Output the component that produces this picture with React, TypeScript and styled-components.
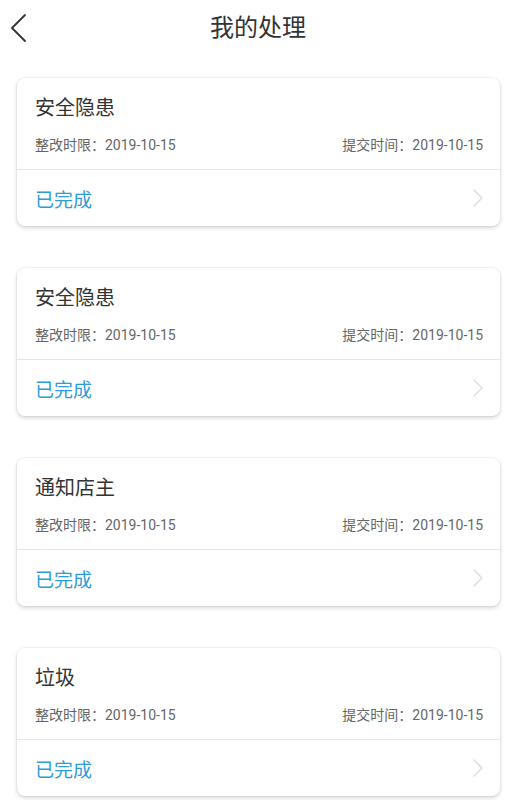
import styled, { createGlobalStyle } from "styled-components";

const GlobalStyle = createGlobalStyle`
  body {
    margin: 0;
    background: #fff;
    font-family: Roboto, "Noto Sans CJK SC", sans-serif;
  }
`;

const Page = styled.div`
  width: 520px;
  min-height: 800px;
  background: #fff;
`;

const Header = styled.header`
  position: relative;
  height: 56px;
  display: flex;
  align-items: center;
  justify-content: center;
`;

const BackBtn = styled.button`
  position: absolute;
  left: 6px;
  top: 11px;
  width: 24px;
  height: 34px;
  padding: 0;
  border: 0;
  background: none;
  display: flex;
  align-items: center;
  justify-content: center;
`;

const Title = styled.h1`
  margin: 0;
  margin-left: -4px;
  font-size: 24px;
  font-weight: 400;
  color: #333;
  line-height: 32px;
`;

const List = styled.div`
  display: flex;
  flex-direction: column;
  gap: 42px;
  padding: 22px 20px 20px 17px;
`;

const Card = styled.article`
  background: #fff;
  border-radius: 8px;
  box-shadow: 0 0 0 1px rgba(0, 0, 0, 0.04), 0 2px 4px rgba(0, 0, 0, 0.16);
  overflow: hidden;
`;

const Top = styled.div`
  padding: 16px 17px 14px 18px;
  border-bottom: 1px solid #e6e6e6;
`;

const CardTitle = styled.h2`
  margin: 0;
  font-size: 20px;
  line-height: 28px;
  font-weight: 400;
  color: #333;
`;

const Meta = styled.div`
  margin-top: 13px;
  display: flex;
  justify-content: space-between;
  font-size: 14px;
  line-height: 20px;
  color: #666;
`;

const Bottom = styled.div`
  height: 56px;
  display: flex;
  align-items: center;
  justify-content: space-between;
  padding: 0 16px 0 18px;
`;

const Status = styled.span`
  font-size: 19px;
  color: #2e9dd6;
`;

type Item = { title: string; deadline: string; submitted: string };

const items: Item[] = [
  { title: "安全隐患", deadline: "2019-10-15", submitted: "2019-10-15" },
  { title: "安全隐患", deadline: "2019-10-15", submitted: "2019-10-15" },
  { title: "通知店主", deadline: "2019-10-15", submitted: "2019-10-15" },
  { title: "垃圾", deadline: "2019-10-15", submitted: "2019-10-15" },
];

function Chevron({ dir, color, w, h, sw }: { dir: "l" | "r"; color: string; w: number; h: number; sw: number }) {
  const d = dir === "l" ? `M${w - 2} 2 L2 ${h / 2} L${w - 2} ${h - 2}` : `M2 2 L${w - 2} ${h / 2} L2 ${h - 2}`;
  return (
    <svg width={w} height={h} viewBox={`0 0 ${w} ${h}`} fill="none">
      <path d={d} stroke={color} strokeWidth={sw} strokeLinecap="round" strokeLinejoin="round" />
    </svg>
  );
}

export default function App() {
  return (
    <Page>
      <GlobalStyle />
      <Header>
        <BackBtn>
          <Chevron dir="l" color="#333" w={17} h={30} sw={1.8} />
        </BackBtn>
        <Title>我的处理</Title>
      </Header>
      <List>
        {items.map((it, i) => (
          <Card key={i}>
            <Top>
              <CardTitle>{it.title}</CardTitle>
              <Meta>
                <span>整改时限：{it.deadline}</span>
                <span>提交时间：{it.submitted}</span>
              </Meta>
            </Top>
            <Bottom>
              <Status>已完成</Status>
              <Chevron dir="r" color="#dedede" w={12} h={20} sw={1.5} />
            </Bottom>
          </Card>
        ))}
      </List>
    </Page>
  );
}
